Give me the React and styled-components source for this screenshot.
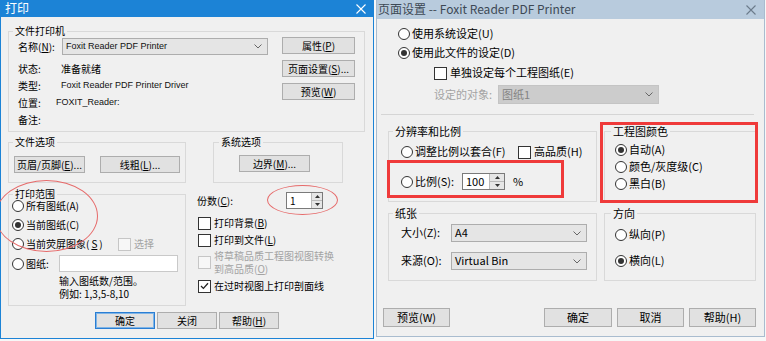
import React from "react";
import styled, { createGlobalStyle } from "styled-components";

const GlobalStyle = createGlobalStyle`
  html, body {
    margin: 0;
    padding: 0;
    background: #f7f7f7;
  }
  body {
    font-family: "Noto Sans CJK SC", "Liberation Sans", sans-serif;
    color: #000;
  }
  * {
    box-sizing: border-box;
  }
`;

const Screen = styled.div`
  position: relative;
  width: 766px;
  height: 341px;
  display: flex;
  align-items: flex-start;
  gap: 2px;
  overflow: hidden;
`;

const Dialog = styled.div`
  width: ${(p) => p.$w}px;
  height: ${(p) => p.$h}px;
  flex-shrink: 0;
  display: flex;
  flex-direction: column;
  background: #f0f0f0;
  border: 1px solid ${(p) => p.$frame};
  border-top: 0;
  font-size: ${(p) => p.$fs}px;
  line-height: 1.2;
`;

const TitleBar = styled.div`
  height: ${(p) => p.$h}px;
  flex-shrink: 0;
  display: flex;
  align-items: center;
  justify-content: space-between;
  padding: 0 ${(p) => p.$pr}px 0 ${(p) => p.$pl}px;
  background: ${(p) => p.$bg};
  color: ${(p) => p.$fg};
  font-size: 12px;
  white-space: nowrap;
`;

const Body = styled.div`
  display: flex;
  flex-direction: column;
  padding: ${(p) => p.$pad};
`;

const Fieldset = styled.fieldset`
  width: ${(p) => p.$w}px;
  height: ${(p) => p.$h}px;
  min-width: 0;
  flex-shrink: 0;
  margin: 0;
  padding: ${(p) => p.$pad || "0"};
  border: 1px solid #d9d9d9;
`;

const Legend = styled.legend`
  margin-left: ${(p) => p.$ml}px;
  padding: 0 2px;
  line-height: 14px;
  white-space: nowrap;
`;

const Row = styled.div`
  display: flex;
  align-items: ${(p) => p.$align || "center"};
  justify-content: ${(p) => p.$justify || "flex-start"};
  gap: ${(p) => p.$gap || 0}px;
  height: ${(p) => (p.$h ? `${p.$h}px` : "auto")};
  width: ${(p) => (p.$w ? `${p.$w}px` : "auto")};
  margin: ${(p) => p.$m || "0"};
  padding: ${(p) => p.$pad || "0"};
  flex-shrink: 0;
  white-space: nowrap;
`;

const Column = styled.div`
  display: flex;
  flex-direction: column;
  gap: ${(p) => p.$gap || 0}px;
  margin: ${(p) => p.$m || "0"};
  padding: ${(p) => p.$pad || "0"};
  width: ${(p) => (p.$w ? `${p.$w}px` : "auto")};
`;

const Text = styled.span`
  width: ${(p) => (p.$w ? `${p.$w}px` : "auto")};
  flex-shrink: 0;
  color: ${(p) => (p.$dim ? "#a3a3a3" : "#000")};
  margin-left: ${(p) => p.$ml || 0}px;
  line-height: ${(p) => (p.$lh ? `${p.$lh}px` : "inherit")};
  white-space: nowrap;
`;

const Latin = styled.span`
  font-family: "Liberation Sans", "Noto Sans CJK SC", sans-serif;
  font-size: 9px;
  color: #111;
  white-space: nowrap;
`;

const Key = styled.u`
  text-decoration: underline;
  text-underline-offset: 1px;
`;

const Button = styled.button`
  width: ${(p) => p.$w}px;
  height: ${(p) => p.$h}px;
  flex-shrink: 0;
  display: flex;
  align-items: center;
  justify-content: center;
  margin: 0;
  padding: 0;
  font: inherit;
  color: #000;
  background: #e1e1e1;
  border: 1px solid ${(p) => (p.$primary ? "#2a7ed3" : "#adadad")};
  box-shadow: ${(p) => (p.$primary ? "inset 0 0 0 1px #7fb4e6" : "none")};
  white-space: nowrap;
`;

const Combo = styled.div`
  width: ${(p) => p.$w}px;
  height: ${(p) => p.$h}px;
  flex-shrink: 0;
  display: flex;
  align-items: center;
  justify-content: space-between;
  padding: 0 5px 0 3px;
  background: ${(p) => (p.$off ? "#cccccc" : "#e5e5e5")};
  border: 1px solid ${(p) => (p.$off ? "#c4c4c4" : "#adadad")};
  color: ${(p) => (p.$off ? "#838383" : "#000")};
  white-space: nowrap;
`;

const Field = styled.div`
  width: ${(p) => p.$w}px;
  height: ${(p) => p.$h}px;
  flex-shrink: 0;
  background: #fff;
  border: 1px solid #c9c9c9;
`;

const Spin = styled.div`
  width: ${(p) => p.$w}px;
  height: ${(p) => p.$h}px;
  flex-shrink: 0;
  display: flex;
  border: 1px solid #7a7a7a;
  background: #fff;
`;

const SpinValue = styled.div`
  flex: 1;
  display: flex;
  align-items: center;
  padding-left: 3px;
`;

const SpinArrows = styled.div`
  width: ${(p) => p.$w}px;
  display: flex;
  flex-direction: column;
  border-left: 1px solid #b9b9b9;
`;

const SpinHalf = styled.div`
  flex: 1;
  display: flex;
  align-items: center;
  justify-content: center;
  background: #e6e6e6;
  & + & {
    border-top: 1px solid #b9b9b9;
  }
`;

const Dot = styled.span`
  width: 12px;
  height: 12px;
  flex-shrink: 0;
  display: inline-flex;
  align-items: center;
  justify-content: center;
  border-radius: 50%;
  border: 1px solid #333;
  background: #fff;
  &::after {
    content: "";
    display: ${(p) => (p.$on ? "block" : "none")};
    width: 6px;
    height: 6px;
    border-radius: 50%;
    background: #333;
  }
`;

const Box = styled.span`
  width: 13px;
  height: 13px;
  flex-shrink: 0;
  display: inline-flex;
  align-items: center;
  justify-content: center;
  border: 1px solid ${(p) => (p.$off ? "#c6c6c6" : "#333")};
  background: ${(p) => (p.$off ? "#f7f7f7" : "#fff")};
`;

const Rule = styled.div`
  height: 1px;
  flex-shrink: 0;
  margin: ${(p) => p.$m};
  background: #d5d5d5;
`;

const GroupGrid = styled.div`
  display: grid;
  grid-template-columns: 209px 152px;
  grid-template-rows: 78px 75px;
  column-gap: 7px;
  row-gap: 4px;
  margin: 9px 0 0 11px;
`;

const Mark = styled.div`
  position: absolute;
  left: ${(p) => p.$x}px;
  top: ${(p) => p.$y}px;
  width: ${(p) => p.$w}px;
  height: ${(p) => p.$h}px;
  border: ${(p) => (p.$ellipse ? "1px solid #e66a6a" : "3px solid #ef3a3a")};
  border-radius: ${(p) => (p.$ellipse ? "50%" : "0")};
  pointer-events: none;
`;

const Chevron = () => (
  <svg width="8" height="5" viewBox="0 0 8 5">
    <path d="M0.5 0.5 L4 4 L7.5 0.5" fill="none" stroke="#666" strokeWidth="1" />
  </svg>
);

const Close = ({ color }) => (
  <svg width="10" height="10" viewBox="0 0 10 10">
    <path d="M0.5 0.5 L9.5 9.5 M9.5 0.5 L0.5 9.5" stroke={color} strokeWidth="1.1" />
  </svg>
);

const Tick = () => (
  <svg width="9" height="8" viewBox="0 0 9 8">
    <path d="M1 4 L3.4 6.4 L8 1.2" fill="none" stroke="#222" strokeWidth="1.3" />
  </svg>
);

const Up = () => (
  <svg width="5" height="3" viewBox="0 0 5 3">
    <polygon points="0,3 2.5,0 5,3" fill="#333" />
  </svg>
);

const Down = () => (
  <svg width="5" height="3" viewBox="0 0 5 3">
    <polygon points="0,0 5,0 2.5,3" fill="#333" />
  </svg>
);

const Radio = ({ on, children, w, h = 16, m }) => (
  <Row $h={h} $w={w} $gap={2} $m={m}>
    <Dot $on={on} />
    {children}
  </Row>
);

const Check = ({ on, off, children, h = 16, m }) => (
  <Row $h={h} $gap={3} $m={m}>
    <Box $off={off}>{on && <Tick />}</Box>
    <Text $dim={off}>{children}</Text>
  </Row>
);

const SpinBox = ({ value, w, h, arrows }) => (
  <Spin $w={w} $h={h}>
    <SpinValue>{value}</SpinValue>
    <SpinArrows $w={arrows}>
      <SpinHalf>
        <Up />
      </SpinHalf>
      <SpinHalf>
        <Down />
      </SpinHalf>
    </SpinArrows>
  </Spin>
);

function PrintDialog() {
  return (
    <Dialog $w={374} $h={339} $frame="#1c83d6" $fs={10}>
      <TitleBar $h={17} $pl={4} $pr={7} $bg="#1c83d6" $fg="#fff">
        打印
        <Close color="#fff" />
      </TitleBar>
      <Body $pad="7px 7px 0 7px">
        <Fieldset $w={357} $h={108}>
          <Legend $ml={4}>文件打印机</Legend>
          <Row $align="flex-start" $justify="space-between" $pad="0 9px 0 9px">
            <Column>
              <Row $h={17}>
                <Text $w={44}>
                  名称(<Key>N</Key>):
                </Text>
                <Combo $w={206} $h={17}>
                  <Latin>Foxit Reader PDF Printer</Latin>
                  <Chevron />
                </Combo>
              </Row>
              <Column $m="5px 0 0 0">
                <Row $h={17}>
                  <Text $w={43}>状态:</Text>
                  <Text>准备就绪</Text>
                </Row>
                <Row $h={17}>
                  <Text $w={43}>类型:</Text>
                  <Latin>Foxit Reader PDF Printer Driver</Latin>
                </Row>
                <Row $h={17}>
                  <Text $w={38}>位置:</Text>
                  <Latin>FOXIT_Reader:</Latin>
                </Row>
                <Row $h={17}>
                  <Text>备注:</Text>
                </Row>
              </Column>
            </Column>
            <Column $gap={6} $m="-1px 0 0 0">
              <Button $w={73} $h={17}>
                属性(<Key>P</Key>)
              </Button>
              <Button $w={73} $h={17}>
                页面设置(<Key>S</Key>)...
              </Button>
              <Button $w={73} $h={17}>
                预览(<Key>W</Key>)
              </Button>
            </Column>
          </Row>
        </Fieldset>

        <Row $align="flex-start" $gap={27} $m="3px 0 0 0">
          <Fieldset $w={178} $h={48} $pad="7px 0 0 5px">
            <Legend $ml={-1}>文件选项</Legend>
            <Row $gap={15}>
              <Button $w={71} $h={17}>
                页眉/页脚(<Key>E</Key>)...
              </Button>
              <Button $w={80} $h={17}>
                线粗(<Key>L</Key>)...
              </Button>
            </Row>
          </Fieldset>
          <Fieldset $w={130} $h={48} $pad="6px 0 0 25px">
            <Legend $ml={-20}>系统选项</Legend>
            <Button $w={71} $h={17}>
              边界(<Key>M</Key>)...
            </Button>
          </Fieldset>
        </Row>

        <Row $align="flex-start" $gap={11} $m="4px 0 0 0">
          <Fieldset $w={178} $h={119} $pad="0 0 0 3px">
            <Legend $ml={1}>打印范围</Legend>
            <Column $gap={1} $m="-4px 0 0 0">
              <Radio h={18}>所有图纸(A)</Radio>
              <Radio h={18} on>
                当前图纸(C)
              </Radio>
              <Row $h={18}>
                <Radio w={106} h={18}>
                  当前荧屏图象(<Key>S</Key>)
                </Radio>
                <Check off h={18}>
                  选择
                </Check>
              </Row>
              <Row $h={19}>
                <Radio w={47} h={19}>
                  图纸:
                </Radio>
                <Field $w={119} $h={17} />
              </Row>
              <Column $pad="0 0 0 47px">
                <Text $lh={13}>输入图纸数/范围。</Text>
                <Text $lh={13}>例如: 1,3,5-8,10</Text>
              </Column>
            </Column>
          </Fieldset>

          <Column>
            <Row $h={17} $w={126} $justify="space-between" $m="5px 0 0 0">
              <Text>
                份数(<Key>C</Key>):
              </Text>
              <SpinBox value="1" w={37} h={17} arrows={11} />
            </Row>
            <Column $m="6px 0 0 1px" $gap={1}>
              <Check>
                打印背景(<Key>B</Key>)
              </Check>
              <Check>
                打印到文件(<Key>L</Key>)
              </Check>
              <Row $gap={3}>
                <Box $off />
                <Column>
                  <Text $dim $lh={13}>
                    将草稿品质工程图视图转换
                  </Text>
                  <Text $dim $lh={13}>
                    到高品质(<Key>O</Key>)
                  </Text>
                </Column>
              </Row>
              <Check on m="2px 0 0 0">
                在过时视图上打印剖面线
              </Check>
            </Column>
          </Column>
        </Row>

        <Row $gap={2} $m="6px 0 0 87px">
          <Button $w={60} $h={17} $primary>
            确定
          </Button>
          <Button $w={60} $h={17}>
            关闭
          </Button>
          <Button $w={60} $h={17}>
            帮助(<Key>H</Key>)
          </Button>
        </Row>
      </Body>
    </Dialog>
  );
}

function PageSetupDialog() {
  return (
    <Dialog $w={389} $h={337} $frame="#a9bccf" $fs={11}>
      <TitleBar $h={19} $pl={1} $pr={8} $bg="#b8cbdd" $fg="#3d4955">
        页面设置 -- Foxit Reader PDF Printer
        <Close color="#6b7b8b" />
      </TitleBar>
      <Body $pad="0">
        <Column $pad="7px 0 0 21px">
          <Radio>使用系统设定(U)</Radio>
          <Radio on m="3px 0 0 0">
            使用此文件的设定(D)
          </Radio>
          <Check m="4px 0 0 36px">单独设定每个工程图纸(E)</Check>
          <Row $h={19} $m="4px 0 0 36px">
            <Text $w={64} $dim>
              设定的对象:
            </Text>
            <Combo $w={161} $h={19} $off>
              图纸1
              <Chevron />
            </Combo>
          </Row>
        </Column>

        <Rule $m="10px 10px 0 4px" />

        <GroupGrid>
          <Fieldset $w={209} $h={78} $pad="6px 0 0 12px">
            <Legend $ml={-8}>分辨率和比例</Legend>
            <Row $h={16}>
              <Radio w={117}>调整比例以套合(F)</Radio>
              <Check>高品质(H)</Check>
            </Row>
            <Row $h={17} $m="13px 0 0 0">
              <Radio w={61} h={17}>
                比例(S):
              </Radio>
              <SpinBox value="100" w={43} h={17} arrows={15} />
              <Text $ml={8}>%</Text>
            </Row>
          </Fieldset>

          <Fieldset $w={152} $h={78} $pad="3px 0 0 10px">
            <Legend $ml={-4}>工程图颜色</Legend>
            <Radio h={17} on>
              自动(A)
            </Radio>
            <Radio h={17}>颜色/灰度级(C)</Radio>
            <Radio h={17}>黑白(B)</Radio>
          </Fieldset>

          <Fieldset $w={209} $h={75} $pad="4px 0 0 12px">
            <Legend $ml={-8}>纸张</Legend>
            <Column $gap={10}>
              <Row $h={18}>
                <Text $w={50}>大小(Z):</Text>
                <Combo $w={136} $h={18}>
                  A4
                  <Chevron />
                </Combo>
              </Row>
              <Row $h={18}>
                <Text $w={50}>来源(O):</Text>
                <Combo $w={136} $h={18}>
                  Virtual Bin
                  <Chevron />
                </Combo>
              </Row>
            </Column>
          </Fieldset>

          <Fieldset $w={152} $h={75} $pad="7px 0 0 10px">
            <Legend $ml={-4}>方向</Legend>
            <Column $gap={10}>
              <Radio>纵向(P)</Radio>
              <Radio on>横向(L)</Radio>
            </Column>
          </Fieldset>
        </GroupGrid>

        <Row $h={19} $justify="space-between" $pad="0 8px 0 6px" $m="27px 0 0 0">
          <Button $w={67} $h={19}>
            预览(W)
          </Button>
          <Row $gap={5}>
            <Button $w={68} $h={19}>
              确定
            </Button>
            <Button $w={67} $h={19}>
              取消
            </Button>
            <Button $w={67} $h={19}>
              帮助(H)
            </Button>
          </Row>
        </Row>
      </Body>
    </Dialog>
  );
}

export default function App() {
  return (
    <>
      <GlobalStyle />
      <Screen>
        <PrintDialog />
        <PageSetupDialog />
        <Mark $ellipse $x={-5} $y={180} $w={103} $h={72} />
        <Mark $ellipse $x={267} $y={185} $w={71} $h={30} />
        <Mark $x={387} $y={160} $w={177} $h={38} />
        <Mark $x={600} $y={122} $w={158} $h={81} />
      </Screen>
    </>
  );
}
